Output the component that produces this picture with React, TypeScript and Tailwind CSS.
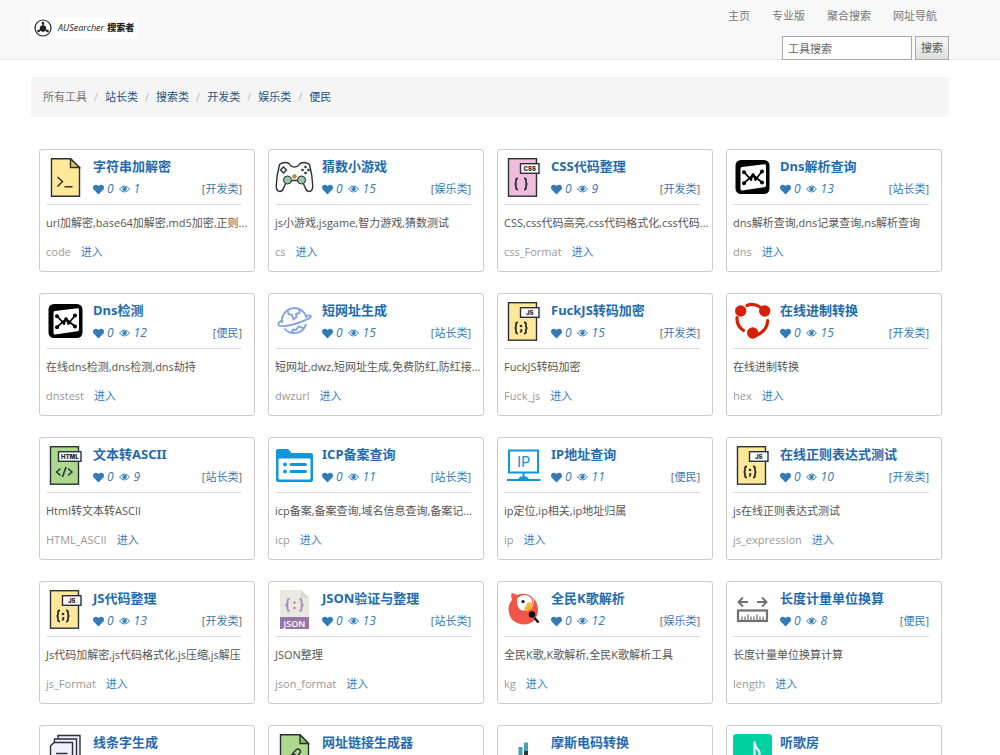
import type { ReactNode } from "react"
import { FaHeart } from "react-icons/fa"

interface Tool {
  title: string
  icon: ReactNode
  views?: number
  category?: string
  desc?: string
  slug?: string
}

const navLinks = ["主页", "专业版", "聚合搜索", "网址导航"]
const categories = ["站长类", "搜索类", "开发类", "娱乐类", "便民"]

function Svg({ children }: { children: ReactNode }) {
  return (
    <svg viewBox="0 0 39 39" className="size-[39px] shrink-0" fill="none" aria-hidden="true">
      {children}
    </svg>
  )
}

function Braces() {
  return (
    <g stroke="#2b2f38" strokeWidth="1.800">
      <path d="M14 20.500h-.5q-1.500 0-1.500 1.500v2.500q0 1.500-1.500 1.500q1.500 0 1.500 1.500v2.500q0 1.500 1.500 1.500h.5" />
      <path d="M22 20.500h.5q1.500 0 1.500 1.500v2.500q0 1.500 1.500 1.500q-1.500 0-1.500 1.500v2.500q0 1.500-1.500 1.500h-.5" transform="translate(-2 0)" />
    </g>
  )
}

function CodeFile({ label, fill, children }: { label: string; fill: string; children: ReactNode }) {
  const left = label === "HTML" ? 12.5 : 16.5
  return (
    <Svg>
      <rect x="4.500" y=".7" width="28" height="37.500" fill={fill} stroke="#2b2f38" strokeWidth="1.400" />
      <rect x={left} y="5.700" width={35 - left} height="9.600" fill="#fff" stroke="#2b2f38" strokeWidth="1.400" />
      <text
        x={(35 + left) / 2}
        y="12.800"
        textAnchor="middle"
        fontSize="6"
        fontWeight="900"
        fontFamily="Inter, sans-serif"
        fill="#2b2f38"
      >
        {label}
      </text>
      {children}
    </Svg>
  )
}

const jsIcon = (
  <CodeFile label="JS" fill="#ffe999">
    <Braces />
    <circle cx="17" cy="24" r="1.300" fill="#2b2f38" />
    <path d="M17.300 27v2l-1 1.500" stroke="#2b2f38" strokeWidth="1.800" />
  </CodeFile>
)

const dnsIcon = (
  <Svg>
    <rect x="2.500" y="2" width="34" height="34" rx="5.500" fill="#000" />
    <path d="M7.500 10.500Q7.500 9 9 8.900L31.500 6.300Q33 6.200 33 7.700V27.500Q33 29 31.500 29.200L9 32.500Q7.500 32.600 7.500 31Z" fill="#fff" />
    <path d="M11 14.200L18 21.500L20 17L22.500 21.500L29 13.500M11 25.200L20 17L29 24.500" stroke="#000" strokeWidth="1.700" />
    <g fill="#000">
      <circle cx="11" cy="14.200" r="2" />
      <circle cx="29" cy="13.500" r="2" />
      <circle cx="11" cy="25.200" r="2" />
      <circle cx="29" cy="24.500" r="2" />
      <circle cx="20" cy="17" r="1.700" />
      <circle cx="18" cy="21.500" r="1.300" />
      <circle cx="22.500" cy="21.500" r="1.300" />
    </g>
  </Svg>
)

const terminalIcon = (
  <Svg>
    <path d="M5.500 .7H24.500L33.500 9.500V38.200H5.500Z" fill="#ffe999" stroke="#2b2f38" strokeWidth="1.400" />
    <path d="M24.500 .7V9.500H33.500Z" fill="#e8c85a" stroke="#2b2f38" strokeWidth="1.400" />
    <path d="M11.500 19L16.500 23.500L11.500 28.500M18.500 28.800H26.500" stroke="#2b2f38" strokeWidth="1.500" />
  </Svg>
)

const gamepadIcon = (
  <Svg>
    <path
      d="M4.500 6.500Q9 3 14 5.500Q16 9 19.500 9Q23 9 25 5.500Q30 3 34.500 6.500Q37.500 18 37.800 28Q37.600 33.500 34 33.500Q31 33 30 29L27.500 24Q24 26.500 22.500 22.500H16.500Q15 26.500 11.500 24L9 29Q8 33 5 33.500Q1.400 33.500 1.200 28Q1.500 18 4.500 6.500Z"
      fill="#f8fafa"
      stroke="#2b2f38"
      strokeWidth="1.400"
    />
    <path d="M8.500 9L11.500 12L8.500 15L5.500 12Z" stroke="#2b2f38" strokeWidth="1.300" />
    <g fill="#2b2f38">
      <circle cx="30.500" cy="9" r="1.300" />
      <circle cx="30.500" cy="15" r="1.300" />
      <circle cx="27.500" cy="12" r="1.300" />
      <circle cx="33.500" cy="12" r="1.300" />
    </g>
    <circle cx="12.500" cy="22" r="4" fill="#97c9a7" stroke="#2b2f38" />
    <circle cx="26.500" cy="22" r="4" fill="#97c9a7" stroke="#2b2f38" />
    <circle cx="19.500" cy="18.500" r="1.700" fill="#f29c1f" stroke="#7a4a10" strokeWidth=".8" />
  </Svg>
)

const cssIcon = (
  <CodeFile label="CSS" fill="#f0bcdc">
    <Braces />
  </CodeFile>
)

const globeIcon = (
  <Svg>
    <g stroke="#83a4dc" strokeWidth="1.900">
      <path d="M7.200 21A12.300 12.300 0 1 1 31.500 16M31 22A12.300 12.300 0 0 1 9.500 26.500" />
      <path d="M8 17.500Q1.500 21.500 4 23.500Q8 25.500 21 21.500Q35.500 17 36 14.500Q35.500 12.500 31 14" />
      <path d="M12.500 8.500L13.500 12L17 13L18.500 17.500L21.500 15L21 12L24.500 11V7.500M16.500 30.500L18 27.500L21 28L23.500 24.500L28.500 26" />
    </g>
  </Svg>
)

const cycleIcon = (
  <Svg>
    <g fill="#d81e06">
      <circle cx="7.700" cy="9" r="5.700" />
      <circle cx="31.700" cy="9" r="5.700" />
      <circle cx="19.700" cy="31" r="5.700" />
    </g>
    <path d="M14 3.500Q20 .8 27 5M4 15.500Q3.500 24 10.500 28.500M34.700 18.500Q34 29 24 33" stroke="#d81e06" strokeWidth="3.200" strokeLinecap="round" />
  </Svg>
)

const htmlIcon = (
  <CodeFile label="HTML" fill="#aed88e">
    <path d="M14.500 22.500L10.500 26L14.500 29.500M22 22.500L26 26L22 29.500M20 21L16.500 31" stroke="#2b2f38" strokeWidth="1.500" />
  </CodeFile>
)

const folderIcon = (
  <Svg>
    <path d="M1 5Q1 3 3 3H12Q14 3 15 5L16.500 7H36Q38 7 38 9V34Q38 36 36 36H3Q1 36 1 34Z" fill="#1296db" />
    <rect x="3.500" y="12.500" width="32" height="21" rx="1" fill="#fff" />
    <path d="M16 18.500H30.500M16 25.500H30.500" stroke="#1296db" strokeWidth="3" strokeLinecap="round" />
    <circle cx="10" cy="18.500" r="1.900" fill="#1296db" />
    <circle cx="10" cy="25.500" r="1.900" fill="#1296db" />
  </Svg>
)

const ipIcon = (
  <Svg>
    <rect x="5" y="4.500" width="29" height="22" stroke="#1296db" strokeWidth="2" />
    <path d="M14 33L16.500 30.500H18.500V26.500H20.500V30.500H22.500L25 33Z" fill="#1296db" />
    <path d="M3 34H36.500" stroke="#1296db" strokeWidth="2" />
    <text x="19.500" y="20.500" textAnchor="middle" fontSize="15" fontFamily="Lato, sans-serif" fill="#1296db">
      IP
    </text>
  </Svg>
)

const jsonIcon = (
  <Svg>
    <path d="M5 0H26L34 8V27H5Z" fill="#e9e9e0" />
    <path d="M26 0V8H34Z" fill="#d9d7ca" />
    <rect x="5" y="27" width="29" height="12" fill="#9777a8" />
    <text x="19.500" y="36.500" textAnchor="middle" fontSize="9" fontWeight="600" fontFamily="Open Sans, sans-serif" fill="#fff">
      JSON
    </text>
    <g stroke="#a98abb" strokeWidth="1.900">
      <path d="M14.500 9Q12.500 9 12.500 11V13Q12.500 15 10.500 15Q12.500 15 12.500 17V19Q12.500 21 14.500 21" />
      <path d="M24.500 9Q26.500 9 26.500 11V13Q26.500 15 28.500 15Q26.500 15 26.500 17V19Q26.500 21 24.500 21" />
    </g>
    <circle cx="19.500" cy="12.500" r="1.300" fill="#a98abb" />
    <circle cx="19.500" cy="18" r="1.300" fill="#a98abb" />
  </Svg>
)

const parrotIcon = (
  <Svg>
    <path d="M7.500 3Q9 3 13 5Q20 2 27 6Q34 11 34 20Q33 34 19.500 34.500Q5 33 4.500 19Q4.500 14 8 10Q6.500 6 7.500 3Z" fill="#f1564a" />
    <path d="M13 9Q19 2 26 7Q30 11 27 16Q24 21 18 20.500Q12 18 13 9Z" fill="#fff" />
    <path d="M23 13Q28 11 28 15Q27 19 23 21.500Q19 20 21 17Q23 16 23 13Z" fill="#fbb829" />
    <path d="M25 4Q33 8 27 19" stroke="#fff" strokeWidth=".8" />
    <circle cx="19" cy="11.500" r="1.600" fill="#111" />
    <circle cx="28" cy="24.500" r="3.300" fill="#111" />
    <path d="M30.500 28L34.500 32.500" stroke="#111" strokeWidth="2.500" />
  </Svg>
)

const rulerIcon = (
  <Svg>
    <path d="M15 12H5.500M10 7.500L5.500 12L10 16.500M24 12H33.500M29 7.500L33.500 12L29 16.500" stroke="#707070" strokeWidth="1.900" />
    <rect x="5" y="20.500" width="29" height="10.500" stroke="#707070" strokeWidth="2.200" />
    <path d="M9 30v-3.500M12 30v-3.500M15 30v-5.500M18 30v-3.500M21 30v-3.500M24 30v-5.500M27 30v-3.500M30 30v-3.500" stroke="#707070" strokeWidth="1.200" />
  </Svg>
)

const papersIcon = (
  <Svg>
    <g fill="#eef0fa" stroke="#2b2f38" strokeWidth="1.400">
      <path d="M12 1.500H34V32H12Z" />
      <path d="M8.500 5H30.500V35H8.500Z" />
      <path d="M8 8.500H26.500V38H4.500V12Z" />
    </g>
    <path d="M10 19.500H21.500M10 24.500H21.500M10 29.500H21.500" stroke="#2b2f38" strokeWidth="1.400" />
  </Svg>
)

const linkIcon = (
  <Svg>
    <path d="M5.500 .7H25L33.500 9.500V38.200H5.500Z" fill="#aed88e" stroke="#2b2f38" strokeWidth="1.400" />
    <path d="M25 .7V9.500H33.500Z" fill="#8fc56b" stroke="#2b2f38" strokeWidth="1.400" />
    <g stroke="#2b2f38" strokeWidth="1.400">
      <rect x="17" y="16.500" width="9" height="5" rx="2.500" transform="rotate(-45 21.500 19)" />
      <rect x="12.500" y="21.500" width="9" height="5" rx="2.500" transform="rotate(-45 17 24)" />
    </g>
  </Svg>
)

const morseIcon = (
  <Svg>
    <path d="M16.500 13V36M22 8.500V17" stroke="#43a0b8" strokeWidth="4" />
    <path d="M22 17V22" stroke="#333" strokeWidth="4" />
    <path d="M22 22V36" stroke="#43a0b8" strokeWidth="4" />
  </Svg>
)

const musicIcon = (
  <Svg>
    <rect width="39" height="39" rx="3.500" fill="#00d1a2" />
    <path d="M21.500 7.500V25M21.500 9Q23 14.500 26 17Q27.500 20 25.500 22.500" stroke="#fff" strokeWidth="2" />
    <ellipse cx="18" cy="25" rx="4.500" ry="3.500" fill="#fff" />
  </Svg>
)

const tools: Tool[] = [
  { title: "字符串加解密", icon: terminalIcon, views: 1, category: "开发类", desc: "url加解密,base64加解密,md5加密,正则...", slug: "code" },
  { title: "猜数小游戏", icon: gamepadIcon, views: 15, category: "娱乐类", desc: "js小游戏,jsgame,智力游戏,猜数测试", slug: "cs" },
  { title: "CSS代码整理", icon: cssIcon, views: 9, category: "开发类", desc: "CSS,css代码高亮,css代码格式化,css代码...", slug: "css_Format" },
  { title: "Dns解析查询", icon: dnsIcon, views: 13, category: "站长类", desc: "dns解析查询,dns记录查询,ns解析查询", slug: "dns" },
  { title: "Dns检测", icon: dnsIcon, views: 12, category: "便民", desc: "在线dns检测,dns检测,dns劫持", slug: "dnstest" },
  { title: "短网址生成", icon: globeIcon, views: 15, category: "站长类", desc: "短网址,dwz,短网址生成,免费防红,防红接...", slug: "dwzurl" },
  { title: "FuckJS转码加密", icon: jsIcon, views: 15, category: "开发类", desc: "FuckJS转码加密", slug: "Fuck_js" },
  { title: "在线进制转换", icon: cycleIcon, views: 15, category: "开发类", desc: "在线进制转换", slug: "hex" },
  { title: "文本转ASCII", icon: htmlIcon, views: 9, category: "站长类", desc: "Html转文本转ASCII", slug: "HTML_ASCII" },
  { title: "ICP备案查询", icon: folderIcon, views: 11, category: "站长类", desc: "icp备案,备案查询,域名信息查询,备案记...", slug: "icp" },
  { title: "IP地址查询", icon: ipIcon, views: 11, category: "便民", desc: "ip定位,ip相关,ip地址归属", slug: "ip" },
  { title: "在线正则表达式测试", icon: jsIcon, views: 10, category: "开发类", desc: "js在线正则表达式测试", slug: "js_expression" },
  { title: "JS代码整理", icon: jsIcon, views: 13, category: "开发类", desc: "Js代码加解密,js代码格式化,js压缩,js解压", slug: "js_Format" },
  { title: "JSON验证与整理", icon: jsonIcon, views: 13, category: "站长类", desc: "JSON整理", slug: "json_format" },
  { title: "全民K歌解析", icon: parrotIcon, views: 12, category: "娱乐类", desc: "全民K歌,K歌解析,全民K歌解析工具", slug: "kg" },
  { title: "长度计量单位换算", icon: rulerIcon, views: 8, category: "便民", desc: "长度计量单位换算计算", slug: "length" },
  { title: "线条字生成", icon: papersIcon },
  { title: "网址链接生成器", icon: linkIcon },
  { title: "摩斯电码转换", icon: morseIcon },
  { title: "听歌房", icon: musicIcon },
]

function EyeIcon() {
  return (
    <svg viewBox="0 0 22 16" className="w-[11px] h-2" aria-hidden="true">
      <path d="M1 8Q11-4 21 8Q11 20 1 8Z" fill="none" stroke="currentColor" strokeWidth="1.800" />
      <circle cx="11" cy="7.500" r="4.500" fill="currentColor" />
      <path d="M8.500 7Q8.500 5 11 4.800" fill="none" stroke="#fff" strokeWidth="1.200" />
    </svg>
  )
}

function Logo() {
  return (
    <a href="#" className="flex items-center h-[22px] mt-[17px] px-[3px] gap-[6px] bg-white text-[#222]">
      <svg viewBox="0 0 18 18" className="size-[18px]" fill="none" aria-hidden="true">
        <circle cx="9" cy="9" r="8" stroke="currentColor" strokeWidth="1.200" />
        <circle cx="9" cy="9.500" r="3.200" fill="currentColor" />
        <path d="M9 9V4M9 9L4.500 12M9 9L13.500 12" stroke="currentColor" strokeWidth="1.400" />
        <circle cx="9" cy="4" r="1.300" fill="currentColor" />
        <circle cx="4.500" cy="12" r="1.300" fill="currentColor" />
        <circle cx="13.500" cy="12" r="1.300" fill="currentColor" />
      </svg>
      <span className="text-[9px] italic">AUSearcher</span>
      <span className="text-[9px] font-black -ml-[3px]">搜索者</span>
    </a>
  )
}

function ToolCard({ tool }: { tool: Tool }) {
  return (
    <article className="min-h-[123px] pt-2 pl-[6px] pr-3 pb-[11px] border border-[#ccc] rounded-[3px] bg-white">
      <div className="flex gap-2 pb-[7px] border-b border-[#ddd]">
        {tool.icon}
        <div className="flex-1 flex flex-col justify-between">
          <h2 className="text-[13px] leading-4 font-bold text-[#1f6bb0] whitespace-nowrap font-['Noto_Sans','Noto_Sans_CJK_SC',sans-serif]">
            <a href="#">{tool.title}</a>
          </h2>
          {tool.category && (
            <div className="flex items-center leading-4 text-[#337ab7]">
              <FaHeart className="size-[11px]" />
              <i className="ml-[3px] text-xs leading-4">0</i>
              <span className="ml-[5px]"><EyeIcon /></span>
              <i className="ml-1 text-xs leading-4">{tool.views}</i>
              <span className="ml-auto text-[#666]">
                [<a href="#" className="text-[#337ab7]">{tool.category}</a>]
              </span>
            </div>
          )}
        </div>
      </div>
      {tool.desc && <p className="mt-[10px] leading-4 text-[#555] whitespace-nowrap">{tool.desc}</p>}
      {tool.slug && (
        <p className="flex gap-[10px] mt-[13px] leading-4 text-[#999]">
          {tool.slug}
          <a href="#" className="text-[#337ab7]">进入</a>
        </p>
      )}
    </article>
  )
}

export default function App() {
  return (
    <div className="min-h-screen bg-white text-[11px] leading-4 text-[#555] font-['Open_Sans','Noto_Sans_CJK_SC',sans-serif]">
      <header className="flex items-start justify-between h-[60px] pl-[31px] pr-[51px] bg-[#f8f8f8] border-b border-[#e7e7e7]">
        <Logo />
        <div className="flex flex-col items-end">
          <nav className="flex gap-[22px] pt-2 pr-3 text-[#777]">
            {navLinks.map((link) => (
              <a key={link} href="#">{link}</a>
            ))}
          </nav>
          <form className="flex gap-[3px] mt-3" onSubmit={(e) => e.preventDefault()}>
            <input
              type="text"
              aria-label="工具搜索"
              placeholder="工具搜索"
              className="w-[130px] h-6 px-[5px] bg-white border border-[#a9a9a9] placeholder:text-[#666]"
            />
            <button type="submit" className="w-[34px] h-6 border border-[#aaa] bg-linear-to-b from-[#f6f6f6] to-[#dedede]">
              搜索
            </button>
          </form>
        </div>
      </header>

      <main className="pt-[17px] pl-[31px] pr-[51px]">
        <nav className="flex items-center h-10 px-3 rounded-[3px] bg-[#f5f5f5]">
          <span className="text-[#777]">所有工具</span>
          {categories.map((name) => (
            <span key={name} className="flex">
              <span className="px-[7px] text-[#bbb]">/</span>
              <a href="#" className="text-[#23527c]">{name}</a>
            </span>
          ))}
        </nav>
        <section className="grid grid-cols-2 md:grid-cols-4 gap-x-[13px] gap-y-[21px] mt-8 ml-2 mr-[7px]">
          {tools.map((tool) => (
            <ToolCard key={tool.title} tool={tool} />
          ))}
        </section>
      </main>
    </div>
  )
}
